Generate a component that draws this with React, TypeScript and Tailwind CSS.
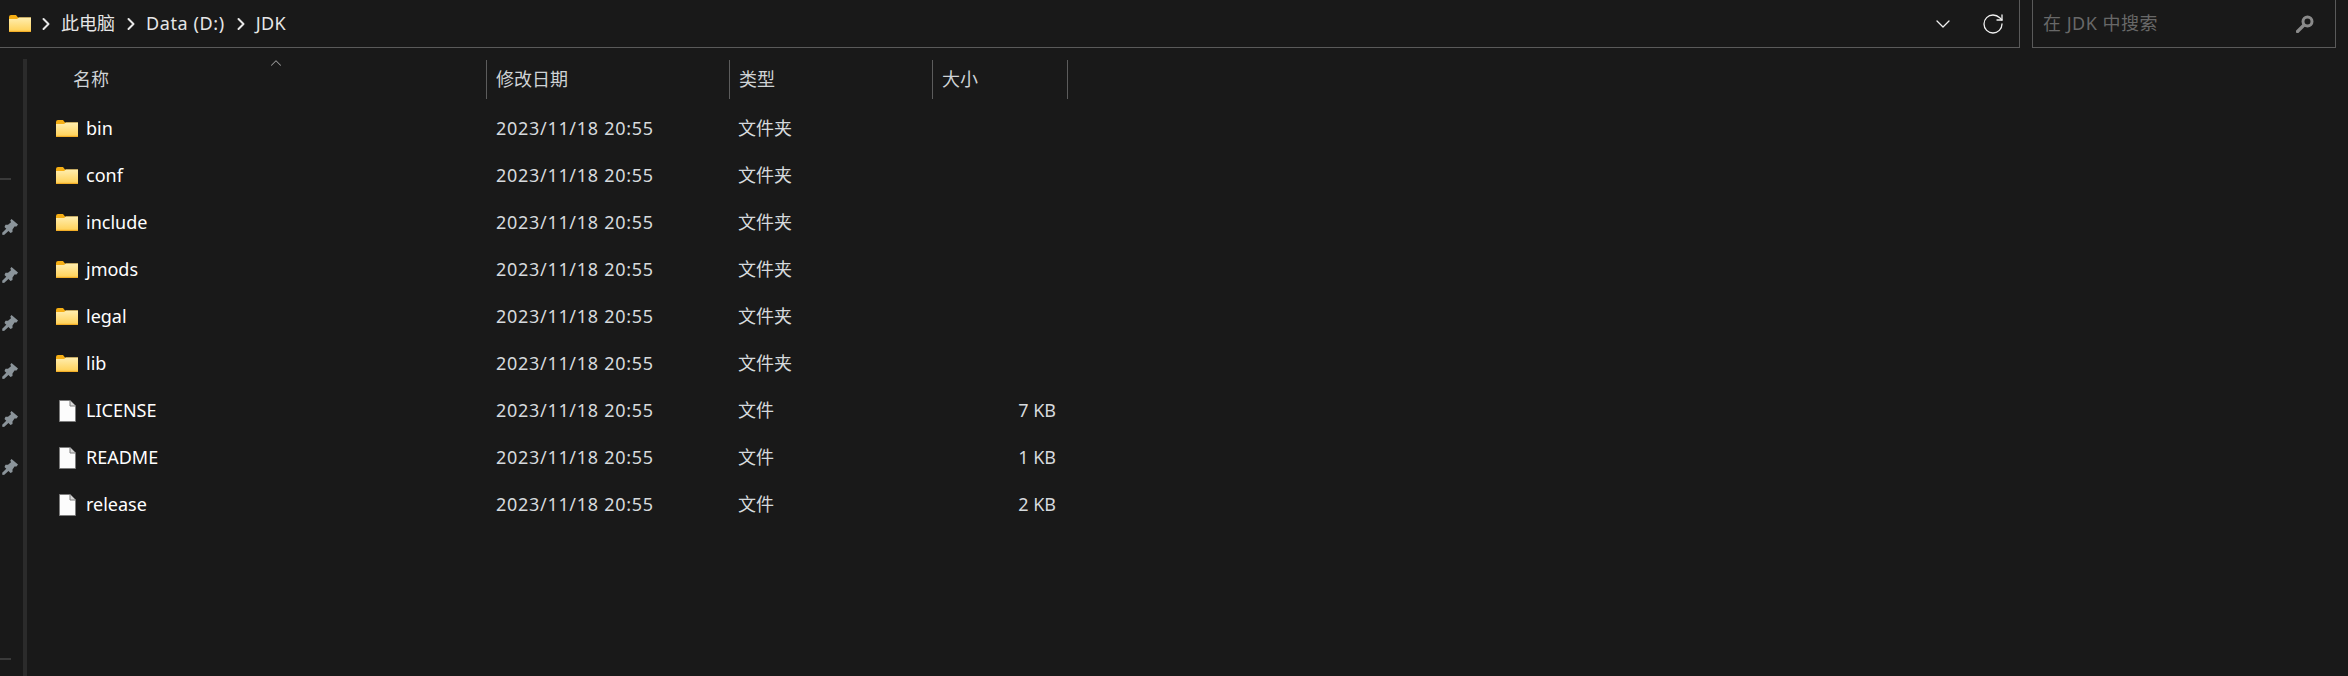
import { ChevronDown, ChevronRight, ChevronUp, RotateCw } from 'lucide-react';

const font = '[font-family:"Noto_Sans","Noto_Sans_CJK_SC",sans-serif]';

const rows = [
	{ name: 'bin', type: '文件夹', size: '', folder: true },
	{ name: 'conf', type: '文件夹', size: '', folder: true },
	{ name: 'include', type: '文件夹', size: '', folder: true },
	{ name: 'jmods', type: '文件夹', size: '', folder: true },
	{ name: 'legal', type: '文件夹', size: '', folder: true },
	{ name: 'lib', type: '文件夹', size: '', folder: true },
	{ name: 'LICENSE', type: '文件', size: '7 KB', folder: false },
	{ name: 'README', type: '文件', size: '1 KB', folder: false },
	{ name: 'release', type: '文件', size: '2 KB', folder: false },
];

function FolderIcon() {
	return (
		<svg width="22" height="17" viewBox="0 0 22 17" className="shrink-0">
			<defs>
				<linearGradient id="folderBody" x1="0" y1="0" x2="0" y2="1">
					<stop offset="0" stopColor="#ffeeb0" />
					<stop offset="1" stopColor="#ffd054" />
				</linearGradient>
			</defs>
			<path d="M0 2 Q0 0 2 0 H7 L9 2.5 H22 V5 H0 Z" fill="#f5ae14" />
			<path d="M0 4 H8 L10 2.5 H22 V17 H0 Z" fill="url(#folderBody)" />
			<rect x="0" y="15.8" width="22" height="1.2" fill="#f2ae28" />
		</svg>
	);
}

function FileIcon() {
	return (
		<svg width="17" height="22" viewBox="0 0 17 22" className="shrink-0">
			<path d="M0.5 0.5 H11 L16.5 6 V21.5 H0.5 Z" fill="#fcfcfc" stroke="#7d7d7d" />
			<path d="M11 0.5 V6 H16.5" fill="#d8d8d8" stroke="#7d7d7d" />
		</svg>
	);
}

function PinIcon() {
	return (
		<svg width="16" height="16" viewBox="0 0 16 16">
			<path d="M9.5 0 L16 5.5 L14.5 7.5 L12.5 7.5 L10.5 10.5 L10.5 13 L8.5 14 L2.5 8 L3.5 5.8 L6 5.8 L9 3.2 L8.3 1.5 Z" fill="#8b949a" />
			<path d="M4.5 9.5 L0.5 13.5 L0 15.5 L2 16 L7 11.5 Z" fill="#8b949a" />
		</svg>
	);
}

function Crumb({ label, className }: { label: string; className?: string }) {
	return (
		<div className="flex items-center gap-[5px]">
			<ChevronRight size={20} strokeWidth={2.4} className="shrink-0 text-[#e8e8e8]" />
			<span className={`text-[#e6e6e6] ${className ?? ''}`}>{label}</span>
		</div>
	);
}

function HeaderCell({ label, className }: { label: string; className: string }) {
	return (
		<div className={`flex h-[39px] items-center border-l border-[#5c5c5c] pl-[9px] text-[#cfd3d6] ${className}`}>
			{label}
		</div>
	);
}

export default function App() {
	return (
		<div className={`flex h-[676px] w-[2348px] flex-col overflow-hidden bg-[#191919] text-[18px] ${font}`}>
			{/* Address and search */}
			<div className="flex h-12 shrink-0 gap-3 pr-3">
				<div className="flex flex-1 items-center border-r border-b border-[#5a5a5a] pr-[14px] pl-[9px]">
					<FolderIcon />
					<div className="ml-[5px] flex items-center gap-[6px]">
						<Crumb label="此电脑" />
						<Crumb label="Data (D:)" className="tracking-[0.6px]" />
						<Crumb label="JDK" className="tracking-[0.4px]" />
					</div>
					<div className="ml-auto flex items-center gap-[26px] text-[#f0f0f0]">
						<ChevronDown size={24} strokeWidth={1.3} />
						<RotateCw size={24} strokeWidth={1.3} />
					</div>
				</div>
				<div className="flex w-[304px] items-center justify-between border-x border-b border-[#5a5a5a] pr-[21px] pl-[10px] text-[#686868]">
					<span className="tracking-[0.5px]">在 JDK 中搜索</span>
					<svg width="18" height="18" viewBox="0 0 18 18">
						<circle cx="11.5" cy="6.5" r="4.5" fill="none" stroke="#8a8a8a" strokeWidth="3" />
						<path d="M8 10 L1.5 16.5" stroke="#8a8a8a" strokeWidth="3.2" strokeLinecap="round" />
					</svg>
				</div>
			</div>

			<div className="flex min-h-0 flex-1">
				{/* Collapsed navigation pane */}
				<div className="relative flex w-[23px] shrink-0 flex-col items-start pt-[171px] pl-[2px]">
					<div className="absolute top-[130px] left-0 h-[2px] w-[11px] bg-[#3a3a3a]" />
					<div className="absolute top-[610px] left-0 h-[2px] w-[11px] bg-[#3a3a3a]" />
					<div className="flex flex-col gap-[32px]">
						{[0, 1, 2, 3, 4, 5].map((i) => (
							<PinIcon key={i} />
						))}
					</div>
				</div>
				<div className="mt-[11px] w-[4px] shrink-0 bg-[#2b2b2b]" />

				<div className="relative flex-1 pt-[12px]">
					<ChevronUp size={18} strokeWidth={1.4} className="absolute top-[6px] left-[240px] text-[#9a9a9a]" />
					{/* Column headers */}
					<div className="flex h-[39px]">
						<div className="flex w-[459px] items-center pl-[46px] text-[#cfd3d6]">名称</div>
						<HeaderCell label="修改日期" className="w-[243px]" />
						<HeaderCell label="类型" className="w-[203px]" />
						<HeaderCell label="大小" className="w-[135px]" />
						<div className="h-[39px] border-l border-[#5c5c5c]" />
					</div>
					{/* Rows */}
					<div className="mt-[6px] flex flex-col">
						{rows.map((r) => (
							<div key={r.name} className="flex h-[47px] items-center">
								<div className="flex w-[459px] items-center pl-[29px] text-white">
									<div className="flex w-[22px] justify-center">{r.folder ? <FolderIcon /> : <FileIcon />}</div>
									<span className="ml-[8px]">{r.name}</span>
								</div>
								<div className="w-[243px] pl-[10px] tracking-[0.7px] text-[#d6dadd]">2023/11/18 20:55</div>
								<div className="w-[203px] pl-[9px] text-[#d6dadd]">{r.type}</div>
								<div className="w-[124px] text-right text-[#d6dadd]">{r.size}</div>
							</div>
						))}
					</div>
				</div>
			</div>
		</div>
	);
}
